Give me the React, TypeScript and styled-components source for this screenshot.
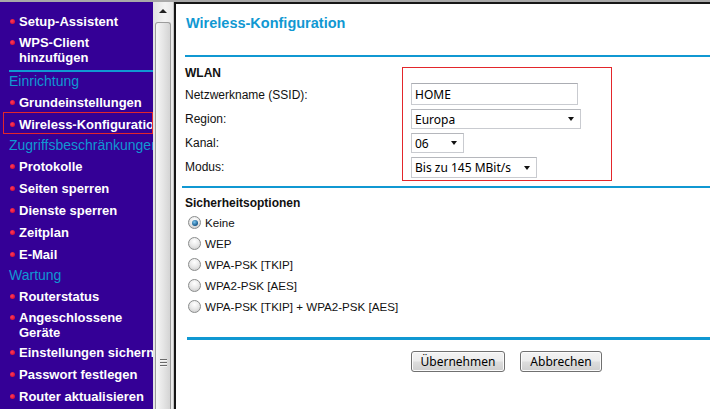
import React from 'react';
import styled, { createGlobalStyle, css } from 'styled-components';

const CYAN = '#1098d2';
const PURPLE = '#340096';

const GlobalStyle = createGlobalStyle`
  html, body {
    margin: 0;
    padding: 0;
    background: #fff;
    overflow: hidden;
  }
  body {
    font-family: "Liberation Sans", Arial, sans-serif;
  }
`;

const Frame = styled.div`
  width: 710px;
  height: 409px;
  display: flex;
  box-sizing: border-box;
  border-top: 2px solid #a9a9a9;
  overflow: hidden;
`;

/* ---------- left menu ---------- */

const Nav = styled.nav`
  width: 153px;
  flex-shrink: 0;
  background: ${PURPLE};
  overflow: hidden;
  padding-top: 9px;
  box-sizing: border-box;
`;

const NavItem = styled.div<{ $multi?: boolean; $active?: boolean }>`
  position: relative;
  padding: ${p => (p.$multi ? '2px 0 2px 19px' : '3px 0 3px 19px')};
  line-height: ${p => (p.$multi ? '15px' : '16px')};
  color: #fff;
  font-size: 13px;
  font-weight: bold;
  white-space: nowrap;
  cursor: pointer;

  &::before {
    content: '';
    position: absolute;
    left: 10px;
    top: ${p => (p.$multi ? '7px' : '8px')};
    width: 5px;
    height: 5px;
    border-radius: 50%;
    background: radial-gradient(circle at 40% 40%, #ff3a5a, #c8002c);
  }

  ${p =>
    p.$active &&
    css`
      &::after {
        content: '';
        position: absolute;
        left: 3px;
        right: 0;
        top: -2px;
        bottom: 2px;
        border: 1px solid #e3262b;
      }
    `}
`;

const NavHeading = styled.div`
  padding: 1px 0 3px 9px;
  line-height: 16px;
  color: ${CYAN};
  font-size: 14px;
  white-space: nowrap;
`;

const NavRule = styled.div`
  height: 2px;
  margin: 3px 0 0 9px;
  background: ${CYAN};
`;

/* ---------- scrollbar ---------- */

const ScrollBar = styled.div`
  width: 20px;
  flex-shrink: 0;
  display: flex;
  flex-direction: column;
  background: linear-gradient(to right, #e2e2e2, #f3f3f3 60%, #e9e9e9);
  border-right: 1px solid #c4c4c4;
`;

const ScrollButton = styled.div`
  height: 18px;
  display: flex;
  align-items: center;
  justify-content: center;

  &::before {
    content: '';
    border-left: 4px solid transparent;
    border-right: 4px solid transparent;
    border-bottom: 4px solid #222;
  }
`;

const Thumb = styled.div`
  flex: 1;
  margin: 2px 2px 0 2px;
  border: 1px solid #9c9c9c;
  border-bottom: none;
  border-radius: 3px 3px 0 0;
  background: linear-gradient(to right, #f6f6f6, #e6e6e6 50%, #d4d4d4);
  display: flex;
  flex-direction: column;
  align-items: center;
  padding-top: 336px;
  box-sizing: border-box;
`;

const Grip = styled.div`
  width: 7px;
  height: 8px;
  background: repeating-linear-gradient(
    to bottom,
    #6a6a6a 0,
    #6a6a6a 1px,
    #f4f4f4 1px,
    #f4f4f4 2px,
    transparent 2px,
    transparent 3px
  );
`;

/* ---------- main panel ---------- */

const Main = styled.main`
  flex: 1;
  min-width: 0;
  background: #fff;
  border-left: 2px solid #161616;
  border-top: 2px solid #161616;
  padding-top: 10px;
  color: #111;
  font-size: 12px;
`;

const Title = styled.h1`
  margin: 0 0 0 10px;
  font-size: 14.5px;
  line-height: 18px;
  font-weight: bold;
  color: ${CYAN};
`;

const Rule = styled.div<{ $top: number; $left: number; $thick?: number }>`
  height: ${p => p.$thick ?? 2}px;
  margin-top: ${p => p.$top}px;
  margin-left: ${p => p.$left}px;
  background: ${CYAN};
`;

const FormBlock = styled.div`
  display: flex;
  margin-top: 10px;
  padding-left: 9px;
`;

const LabelCol = styled.div`
  width: 217px;
  flex-shrink: 0;
`;

const SectionTitle = styled.div<{ $h: number; $top?: number }>`
  height: ${p => p.$h}px;
  margin-top: ${p => p.$top ?? 0}px;
  line-height: ${p => (p.$h < 16 ? p.$h : 12)}px;
  font-weight: bold;
  font-size: 12px;
`;

const Label = styled.div`
  height: 24px;
  line-height: 24px;
`;

const HighlightBox = styled.div`
  width: 210px;
  box-sizing: border-box;
  border: 1px solid #e3262b;
  padding: 15px 0 2px 8px;
  display: flex;
  flex-direction: column;
  align-items: flex-start;
  gap: 4px;
`;

const fieldText = css`
  font-family: "Noto Sans", "Open Sans", sans-serif;
  font-size: 12px;
  color: #000;
`;

const TextField = styled.div<{ $w: number }>`
  ${fieldText};
  width: ${p => p.$w}px;
  height: 22px;
  box-sizing: border-box;
  border: 1px solid #c9cbd0;
  border-top-color: #abadb3;
  padding-left: 3px;
  display: flex;
  align-items: center;
`;

const SelectBox = styled.div<{ $w: number; $h?: number }>`
  ${fieldText};
  width: ${p => p.$w}px;
  height: ${p => p.$h ?? 20}px;
  box-sizing: border-box;
  border: 1px solid #c9cbd0;
  border-top-color: #b5b7bc;
  padding: 0 6px 0 3px;
  display: flex;
  align-items: center;
  justify-content: space-between;
  background: #fff;

  &::after {
    content: '';
    border-left: 3.5px solid transparent;
    border-right: 3.5px solid transparent;
    border-top: 4px solid #111;
  }
`;

const Security = styled.div`
  padding-left: 9px;
`;

const RadioList = styled.div`
  margin-top: 2px;
`;

const RadioRow = styled.label`
  height: 21px;
  display: flex;
  align-items: center;
  gap: 4px;
  padding-left: 3px;
  font-size: 11.6px;
`;

const RadioDot = styled.span<{ $checked?: boolean }>`
  width: 13px;
  height: 13px;
  box-sizing: border-box;
  border-radius: 50%;
  border: 1px solid #8a8c8c;
  background: radial-gradient(circle at 50% 30%, #ffffff, #e8e8e8 50%, #c6c6c6);
  display: flex;
  align-items: center;
  justify-content: center;

  &::after {
    content: '';
    display: ${p => (p.$checked ? 'block' : 'none')};
    width: 6px;
    height: 6px;
    border-radius: 50%;
    background: radial-gradient(circle at 40% 35%, #7cc6f0, #1b5f92 65%, #0c3f68);
  }
`;

const ButtonBar = styled.div`
  display: flex;
  gap: 15px;
  margin-top: 11px;
  padding-left: 235px;
`;

const Button = styled.button<{ $w: number }>`
  ${fieldText};
  width: ${p => p.$w}px;
  height: 21px;
  padding: 0;
  border: 1px solid #707070;
  border-radius: 3px;
  background: linear-gradient(to bottom, #f3f3f3 0%, #ececec 48%, #dddddd 52%, #cfcfcf 100%);
  box-shadow: inset 0 0 0 1px #fbfbfb;
  cursor: pointer;
`;

const menu: { type: 'item' | 'heading' | 'rule'; text?: string[]; active?: boolean }[] = [
  { type: 'item', text: ['Setup-Assistent'] },
  { type: 'item', text: ['WPS-Client', 'hinzufügen'] },
  { type: 'rule' },
  { type: 'heading', text: ['Einrichtung'] },
  { type: 'item', text: ['Grundeinstellungen'] },
  { type: 'item', text: ['Wireless-Konfiguration'], active: true },
  { type: 'heading', text: ['Zugriffsbeschränkungen'] },
  { type: 'item', text: ['Protokolle'] },
  { type: 'item', text: ['Seiten sperren'] },
  { type: 'item', text: ['Dienste sperren'] },
  { type: 'item', text: ['Zeitplan'] },
  { type: 'item', text: ['E-Mail'] },
  { type: 'heading', text: ['Wartung'] },
  { type: 'item', text: ['Routerstatus'] },
  { type: 'item', text: ['Angeschlossene', 'Geräte'] },
  { type: 'item', text: ['Einstellungen sichern'] },
  { type: 'item', text: ['Passwort festlegen'] },
  { type: 'item', text: ['Router aktualisieren'] },
];

const securityOptions = [
  'Keine',
  'WEP',
  'WPA-PSK [TKIP]',
  'WPA2-PSK [AES]',
  'WPA-PSK [TKIP] + WPA2-PSK [AES]',
];

const App: React.FC = () => {
  return (
    <>
      <GlobalStyle />
      <Frame>
        <Nav>
          {menu.map((m, i) => {
            if (m.type === 'rule') return <NavRule key={i} />;
            if (m.type === 'heading') return <NavHeading key={i}>{m.text![0]}</NavHeading>;
            const lines = m.text!;
            return (
              <NavItem key={i} $multi={lines.length > 1} $active={m.active}>
                {lines.map((l, j) => (
                  <React.Fragment key={j}>
                    {j > 0 && <br />}
                    {l}
                  </React.Fragment>
                ))}
              </NavItem>
            );
          })}
        </Nav>

        <ScrollBar>
          <ScrollButton />
          <Thumb>
            <Grip />
          </Thumb>
        </ScrollBar>

        <Main>
          <Title>Wireless-Konfiguration</Title>
          <Rule $top={23} $left={9} />

          <FormBlock>
            <LabelCol>
              <SectionTitle $h={16}>WLAN</SectionTitle>
              <Label>Netzwerkname (SSID):</Label>
              <Label>Region:</Label>
              <Label>Kanal:</Label>
              <Label>Modus:</Label>
            </LabelCol>
            <HighlightBox>
              <TextField $w={167}>HOME</TextField>
              <SelectBox $w={170}>Europa</SelectBox>
              <SelectBox $w={53}>06</SelectBox>
              <SelectBox $w={126} $h={21}>Bis zu 145 MBit/s</SelectBox>
            </HighlightBox>
          </FormBlock>

          <Rule $top={5} $left={6} />

          <Security>
            <SectionTitle $h={14} $top={8}>
              Sicherheitsoptionen
            </SectionTitle>
            <RadioList>
              {securityOptions.map((o, i) => (
                <RadioRow key={o}>
                  <RadioDot $checked={i === 0} />
                  {o}
                </RadioRow>
              ))}
            </RadioList>
          </Security>

          <Rule $top={20} $left={11} $thick={3} />

          <ButtonBar>
            <Button $w={94}>Übernehmen</Button>
            <Button $w={82}>Abbrechen</Button>
          </ButtonBar>
        </Main>
      </Frame>
    </>
  );
};

export default App;
